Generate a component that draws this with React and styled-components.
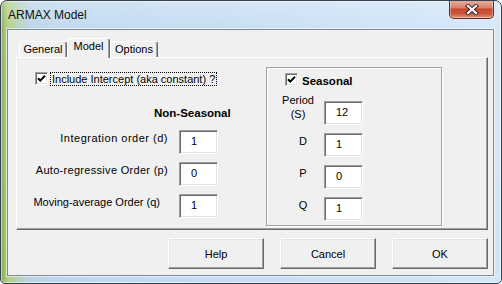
import React from 'react';
import styled, { createGlobalStyle } from 'styled-components';

const Global = createGlobalStyle`
  html, body { margin: 0; padding: 0; background: #ffffff; }
  body { font-family: "Liberation Sans", Arial, sans-serif; color: #000; }
  *, *::before, *::after { box-sizing: border-box; }
`;

const Window = styled.div`
  width: 502px;
  height: 284px;
  border: 1px solid #34404c;
  border-radius: 7px 7px 5px 5px;
  padding: 0 7px 7px 6px;
  display: flex;
  flex-direction: column;
  overflow: hidden;
  background:
    linear-gradient(180deg, rgba(255,255,255,0.25) 0, rgba(255,255,255,0.05) 28px, rgba(255,255,255,0) 100%),
    linear-gradient(90deg, #86a64c 0, #a4c275 4px, #b2cf8a 7px, #bad4e4 28px, #bfd8f1 60px, #c8def4 55%, #d3e6f9 100%);
  box-shadow: inset 0 0 0 1px rgba(255,255,255,0.55);
`;

const TitleBar = styled.div`
  height: 28px;
  display: flex;
  align-items: flex-start;
  justify-content: space-between;
`;

const Title = styled.span`
  margin: 7px 0 0 1px;
  font-size: 12px;
  line-height: 14px;
  color: #111;
`;

const CloseButton = styled.div`
  width: 45px;
  height: 19px;
  margin-top: -1px;
  display: flex;
  align-items: center;
  justify-content: center;
  border: 1px solid #6a2a20;
  border-top: none;
  border-radius: 0 0 5px 5px;
  background: linear-gradient(180deg, #eab0a2 0%, #d98670 40%, #c8452c 52%, #c95a40 78%, #df9a80 100%);
  box-shadow: inset 0 0 0 1px rgba(255,255,255,0.35);
`;

const Client = styled.div`
  flex: 1;
  background: #f0f0f0;
  border: 1px solid #7f8b97;
  box-shadow: 0 0 0 1px rgba(255,255,255,0.55);
  padding: 8px 5px 0 8px;
  display: flex;
  flex-direction: column;
`;

const TabRow = styled.div`
  height: 19px;
  display: flex;
  align-items: flex-end;
  padding-left: 3px;
  position: relative;
  z-index: 1;
`;

const Tab = styled.div`
  width: ${p => p.$w}px;
  height: ${p => (p.$active ? 20 : 16)}px;
  margin-bottom: ${p => (p.$active ? -1 : 0)}px;
  background: #f0f0f0;
  border: 1px solid;
  border-bottom: none;
  border-color: #ffffff #696969 transparent #ffffff;
  border-radius: 3px 3px 0 0;
  box-shadow: inset -1px 0 #a0a0a0;
  display: flex;
  justify-content: center;
  padding-top: 1px;
  font-size: 11px;
  line-height: 13px;
`;

const Panel = styled.div`
  width: 472px;
  height: 173px;
  border: 1px solid;
  border-color: #ffffff #696969 #696969 #ffffff;
  box-shadow: inset -1px -1px #a0a0a0;
  padding-top: 9px;
  display: flex;
`;

const LeftSection = styled.div`
  width: 249px;
  display: flex;
  flex-direction: column;
`;

const CheckRow = styled.div`
  display: flex;
  align-items: flex-start;
  margin: 5px 0 0 18px;
`;

const CheckBox = styled.span`
  width: 13px;
  height: 13px;
  flex: none;
  background: #ffffff;
  border: 1px solid;
  border-color: #a0a0a0 #ffffff #ffffff #a0a0a0;
  box-shadow: inset 1px 1px #696969, inset -1px -1px #e3e3e3;
  display: flex;
  align-items: center;
  justify-content: center;
`;

const FocusLabel = styled.span`
  margin-left: 2px;
  border: 1px dotted #000;
  padding: 0 1px;
  font-size: 11px;
  line-height: 12px;
`;

const BoldLabel = styled.span`
  margin: ${p => p.$top || 0}px 0 0 ${p => p.$left || 0}px;
  font-size: 11.5px;
  font-weight: bold;
  line-height: 14px;
`;

const FieldGrid = styled.div`
  display: grid;
  grid-template-columns: ${p => p.$labelWidth}px 39px;
  row-gap: 8px;
  margin-top: ${p => p.$top}px;
`;

const RightLabel = styled.span`
  justify-self: end;
  align-self: start;
  margin: 1px ${p => p.$gap}px 0 0;
  font-size: 11px;
  line-height: 14px;
  letter-spacing: ${p => p.$track || 0}px;
  white-space: nowrap;
`;

const CenterLabel = styled.span`
  align-self: start;
  margin-top: ${p => p.$top}px;
  padding-left: ${p => p.$shift}px;
  text-align: center;
  font-size: 11px;
  line-height: 14px;
`;

const NumberBox = styled.input`
  width: 39px;
  height: 24px;
  margin: 0;
  padding: 3px 0 6px 11px;
  border: 1px solid;
  border-color: #a0a0a0 #ffffff #ffffff #a0a0a0;
  box-shadow: inset 1px 1px #696969, inset -1px -1px #e3e3e3;
  background: #ffffff;
  font-family: "Liberation Sans", Arial, sans-serif;
  font-size: 11px;
  line-height: 13px;
  color: #000;
  outline: none;
`;

const Frame = styled.div`
  width: 176px;
  height: 159px;
  border: 1px solid #a0a0a0;
  box-shadow: inset 1px 1px #ffffff, 1px 1px #ffffff;
  display: flex;
  flex-direction: column;
`;

const ButtonRow = styled.div`
  width: 472px;
  margin-top: 8px;
  display: flex;
  justify-content: flex-end;
  gap: 16px;
`;

const Button = styled.button`
  width: 96px;
  height: 31px;
  margin: 0;
  padding: 0;
  background: #f0f0f0;
  border: 1px solid;
  border-color: #ffffff #696969 #696969 #ffffff;
  box-shadow: inset -1px -1px #a0a0a0, inset 1px 1px #e3e3e3;
  font-family: "Liberation Sans", Arial, sans-serif;
  font-size: 11px;
  color: #000;
`;

const Check = () => (
  <svg width="9" height="9" viewBox="0 0 9 9">
    <polyline points="1,4.2 3.3,6.6 8,1.8" fill="none" stroke="#000" strokeWidth="2" />
  </svg>
);

const CloseGlyph = () => (
  <svg width="14" height="11" viewBox="0 0 14 11">
    <g strokeLinecap="square">
      <path d="M3 2 L11 9 M11 2 L3 9" stroke="#3b2a28" strokeWidth="4.2" />
      <path d="M3 2 L11 9 M11 2 L3 9" stroke="#ffffff" strokeWidth="2.2" />
    </g>
  </svg>
);

const nonSeasonal = [
  { label: 'Integration order (d)', value: '1', gap: 11, track: 0.5 },
  { label: 'Auto-regressive Order (p)', value: '0', gap: 11, track: 0.3 },
  { label: 'Moving-average Order (q)', value: '1', gap: 19, track: 0 },
];

const seasonal = [
  { label: ['Period', '(S)'], value: '12', top: -8, shift: 5 },
  { label: ['D'], value: '1', top: 1, shift: 15 },
  { label: ['P'], value: '0', top: 1, shift: 15 },
  { label: ['Q'], value: '1', top: 1, shift: 15 },
];

export default function App() {
  return (
    <>
      <Global />
      <Window>
        <TitleBar>
          <Title>ARMAX Model</Title>
          <CloseButton>
            <CloseGlyph />
          </CloseButton>
        </TitleBar>
        <Client>
          <TabRow>
            <Tab $w={48}>General</Tab>
            <Tab $w={43} $active>Model</Tab>
            <Tab $w={48}>Options</Tab>
          </TabRow>
          <Panel>
            <LeftSection>
              <CheckRow>
                <CheckBox><Check /></CheckBox>
                <FocusLabel>Include Intercept (aka constant) ?</FocusLabel>
              </CheckRow>
              <BoldLabel $top={20} $left={137}>Non-Seasonal</BoldLabel>
              <FieldGrid $labelWidth={162} $top={10}>
                {nonSeasonal.map(r => (
                  <React.Fragment key={r.label}>
                    <RightLabel $gap={r.gap} $track={r.track}>{r.label}</RightLabel>
                    <NumberBox readOnly value={r.value} />
                  </React.Fragment>
                ))}
              </FieldGrid>
            </LeftSection>
            <Frame>
              <CheckRow>
                <CheckBox><Check /></CheckBox>
                <BoldLabel $top={1} $left={4}>Seasonal</BoldLabel>
              </CheckRow>
              <FieldGrid $labelWidth={57} $top={13}>
                {seasonal.map(r => (
                  <React.Fragment key={r.label.join('')}>
                    <CenterLabel $top={r.top} $shift={r.shift}>
                      {r.label.map((l, i) => (
                        <React.Fragment key={l}>{i > 0 && <br />}{l}</React.Fragment>
                      ))}
                    </CenterLabel>
                    <NumberBox readOnly value={r.value} />
                  </React.Fragment>
                ))}
              </FieldGrid>
            </Frame>
          </Panel>
          <ButtonRow>
            <Button>Help</Button>
            <Button>Cancel</Button>
            <Button>OK</Button>
          </ButtonRow>
        </Client>
      </Window>
    </>
  );
}
